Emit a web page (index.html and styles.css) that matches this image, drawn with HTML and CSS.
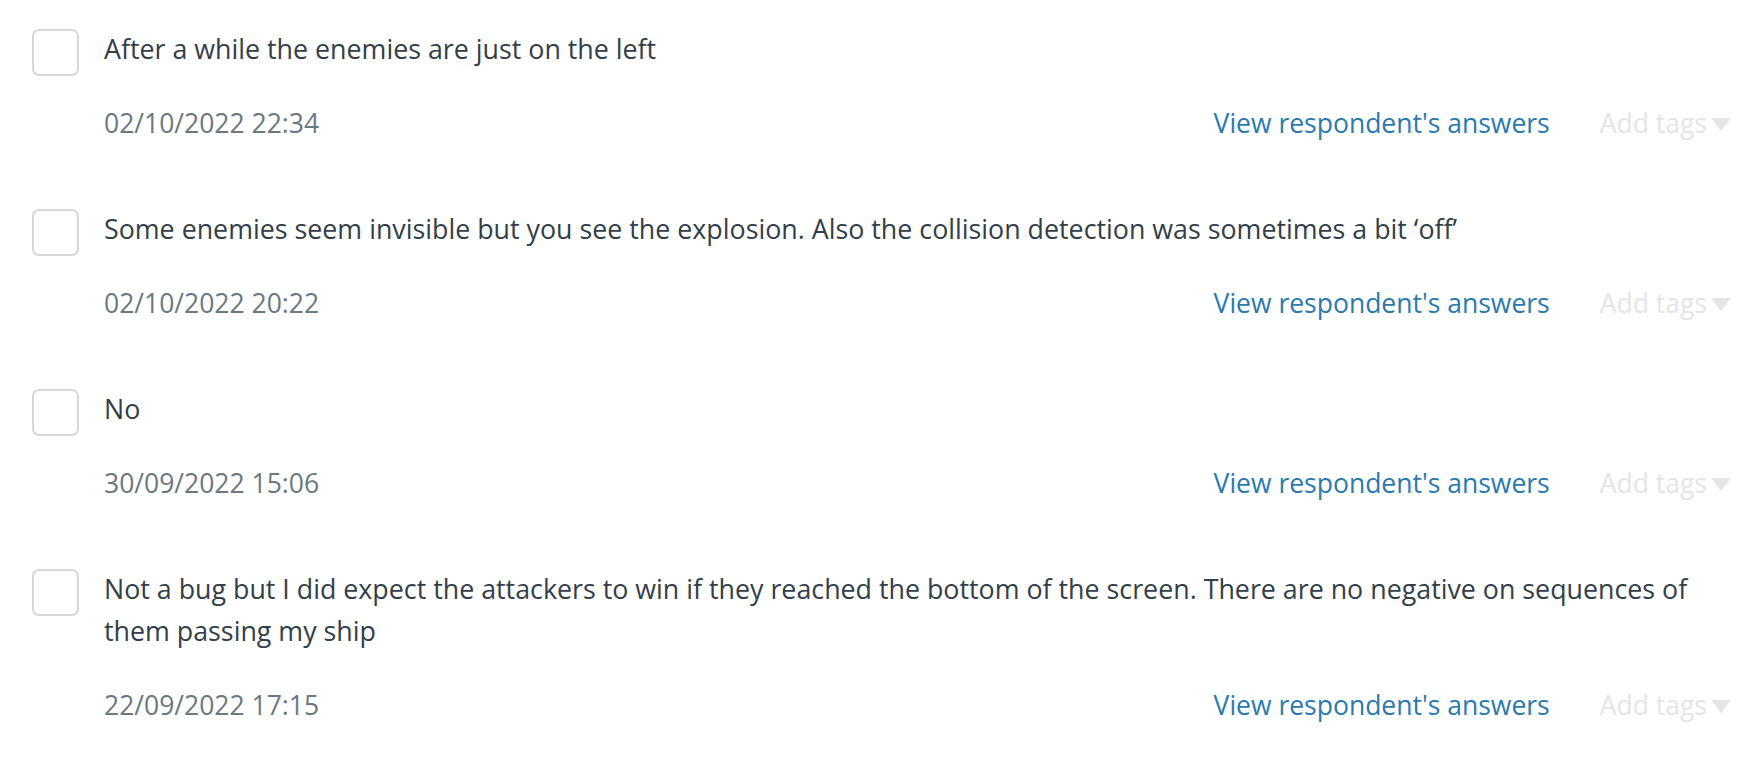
FILE: index.html
```html
<!DOCTYPE html>
<html lang="en">
<head>
<meta charset="utf-8">
<title>Responses</title>
<link rel="stylesheet" href="styles.css">
</head>
<body>
<div class="list">
  <div class="row">
    <span class="checkbox"></span>
    <div class="body">
      <p class="text">After a while the enemies are just on the left</p>
      <div class="meta">
        <span class="date">02/10/2022 22:34</span>
        <a class="link" href="#">View respondent's answers</a>
        <span class="tags">Add tags<svg class="caret" viewBox="0 0 20 13" width="20" height="13"><path d="M0 0H20L10 13Z"/></svg></span>
      </div>
    </div>
  </div>
  <div class="row">
    <span class="checkbox"></span>
    <div class="body">
      <p class="text">Some enemies seem invisible but you see the explosion. Also the collision detection was sometimes a bit ‘off’</p>
      <div class="meta">
        <span class="date">02/10/2022 20:22</span>
        <a class="link" href="#">View respondent's answers</a>
        <span class="tags">Add tags<svg class="caret" viewBox="0 0 20 13" width="20" height="13"><path d="M0 0H20L10 13Z"/></svg></span>
      </div>
    </div>
  </div>
  <div class="row">
    <span class="checkbox"></span>
    <div class="body">
      <p class="text">No</p>
      <div class="meta">
        <span class="date">30/09/2022 15:06</span>
        <a class="link" href="#">View respondent's answers</a>
        <span class="tags">Add tags<svg class="caret" viewBox="0 0 20 13" width="20" height="13"><path d="M0 0H20L10 13Z"/></svg></span>
      </div>
    </div>
  </div>
  <div class="row">
    <span class="checkbox"></span>
    <div class="body">
      <p class="text">Not a bug but I did expect the attackers to win if they reached the bottom of the screen. There are no negative on sequences of them passing my ship</p>
      <div class="meta">
        <span class="date">22/09/2022 17:15</span>
        <a class="link" href="#">View respondent's answers</a>
        <span class="tags">Add tags<svg class="caret" viewBox="0 0 20 13" width="20" height="13"><path d="M0 0H20L10 13Z"/></svg></span>
      </div>
    </div>
  </div>
</div>
</body>
</html>
```

FILE: styles.css
```css
html, body {
  margin: 0;
  padding: 0;
  background: #ffffff;
}

body {
  font-family: "Open Sans", "Liberation Sans", sans-serif;
  font-size: 26.5px;
  color: #333e48;
}

.list {
  display: flex;
  flex-direction: column;
  gap: 64px;
  padding: 28px 29px 0 32px;
}

.row {
  display: flex;
  align-items: flex-start;
  gap: 25px;
}

.checkbox {
  flex: none;
  box-sizing: border-box;
  width: 47px;
  height: 47px;
  margin-top: 1px;
  border: 2px solid #d5d7d9;
  border-radius: 7px;
  background: #fff;
}

.body {
  flex: 1;
  min-width: 0;
}

.text {
  margin: 0;
  font-size: 26.8px;
  line-height: 42px;
  color: #333e48;
}

.meta {
  display: flex;
  align-items: center;
  margin-top: 32px;
  line-height: 42px;
}

.date {
  color: #6b787f;
  margin-right: auto;
}

.link {
  color: #2a7ab0;
  text-decoration: none;
}

.tags {
  display: flex;
  align-items: center;
  margin-left: 50px;
  color: #e4e5e6;
}

.caret {
  display: block;
  margin-left: 4px;
  margin-top: 2px;
  fill: #e4e5e6;
}
```
